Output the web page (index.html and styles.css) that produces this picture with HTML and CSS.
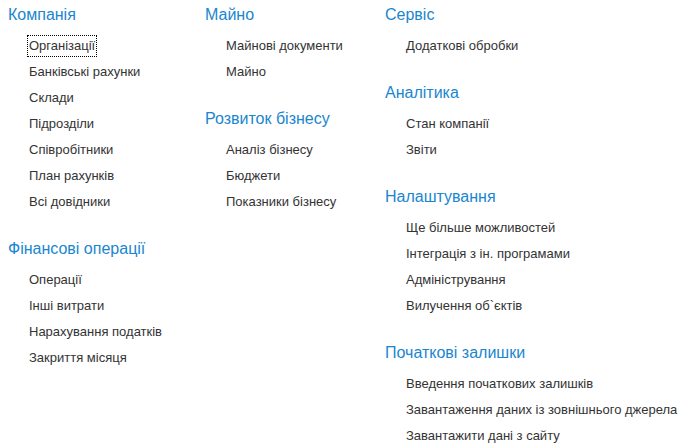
FILE: index.html
```html
<!DOCTYPE html>
<html lang="uk">

<head>
    <meta charset="UTF-8">
    <title>Розділи</title>
    <link rel="stylesheet" href="styles.css">
</head>

<body>
    <div class="sections">
        <div class="column col-1">
            <div class="group">
                <div class="group-title">Компанія</div>
                <a class="item focused" href="#">Організації</a>
                <a class="item" href="#">Банківські рахунки</a>
                <a class="item" href="#">Склади</a>
                <a class="item" href="#">Підрозділи</a>
                <a class="item" href="#">Співробітники</a>
                <a class="item" href="#">План рахунків</a>
                <a class="item" href="#">Всі довідники</a>
            </div>
            <div class="group">
                <div class="group-title">Фінансові операції</div>
                <a class="item" href="#">Операції</a>
                <a class="item" href="#">Інші витрати</a>
                <a class="item" href="#">Нарахування податків</a>
                <a class="item" href="#">Закриття місяця</a>
            </div>
        </div>

        <div class="column col-2">
            <div class="group">
                <div class="group-title">Майно</div>
                <a class="item" href="#">Майнові документи</a>
                <a class="item" href="#">Майно</a>
            </div>
            <div class="group">
                <div class="group-title">Розвиток бізнесу</div>
                <a class="item" href="#">Аналіз бізнесу</a>
                <a class="item" href="#">Бюджети</a>
                <a class="item" href="#">Показники бізнесу</a>
            </div>
        </div>

        <div class="column col-3">
            <div class="group">
                <div class="group-title">Сервіс</div>
                <a class="item" href="#">Додаткові обробки</a>
            </div>
            <div class="group">
                <div class="group-title">Аналітика</div>
                <a class="item" href="#">Стан компанії</a>
                <a class="item" href="#">Звіти</a>
            </div>
            <div class="group">
                <div class="group-title">Налаштування</div>
                <a class="item" href="#">Ще більше можливостей</a>
                <a class="item" href="#">Інтеграція з ін. програмами</a>
                <a class="item" href="#">Адміністрування</a>
                <a class="item" href="#">Вилучення об`єктів</a>
            </div>
            <div class="group">
                <div class="group-title">Початкові залишки</div>
                <a class="item" href="#">Введення початкових залишків</a>
                <a class="item" href="#">Завантаження даних із зовнішнього джерела</a>
                <a class="item" href="#">Завантажити дані з сайту</a>
            </div>
        </div>
    </div>
</body>

</html>
```

FILE: styles.css
```css
body {
    margin: 0;
    padding: 5px 0 0 8px;
    background-color: white;
    font-family: 'Liberation Sans', Arial, sans-serif;
    color: #333333;
}

.sections {
    display: flex;
    align-items: flex-start;
}

.col-1 {
    width: 197px;
}

.col-2 {
    width: 180px;
}

.column {
    display: flex;
    flex-direction: column;
}

.group {
    display: flex;
    flex-direction: column;
    align-items: flex-start;
    margin-bottom: 24px;
}

.group-title {
    font-size: 16px;
    line-height: 20px;
    color: #1a86d0;
    margin-bottom: 8px;
    white-space: nowrap;
}

.item {
    display: block;
    font-size: 13px;
    line-height: 20px;
    margin: 3px 0 3px 20px;
    padding: 0 1px;
    color: #333333;
    text-decoration: none;
    white-space: nowrap;
}

.item.focused {
    outline: 1px dotted #000000;
}
```
